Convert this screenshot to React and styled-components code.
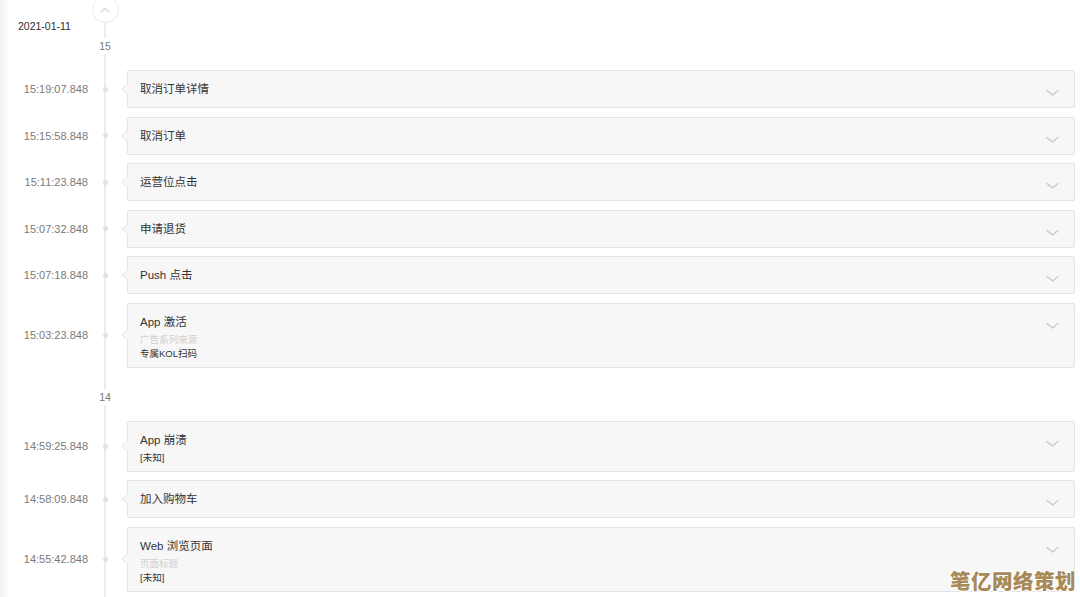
import React from "react";
import styled, { createGlobalStyle } from "styled-components";

const Global = createGlobalStyle`
  html, body { margin: 0; padding: 0; background: #fff; }
  body {
    font-family: "Liberation Sans", "Noto Sans CJK SC", Arial, sans-serif;
    -webkit-font-smoothing: antialiased;
  }
`;

const Page = styled.div`
  position: relative;
  width: 1080px;
  height: 597px;
  overflow: hidden;
  background:
    linear-gradient(#ececec, #ececec) no-repeat 104px 0 / 2px 100%,
    linear-gradient(to right, #f1f1f1, #ffffff 9px) no-repeat 0 0 / 100% 100%;
`;

const Header = styled.div`
  display: grid;
  grid-template-columns: 96px 18px;
  height: 36px;
`;

const DateText = styled.div`
  padding: 19px 0 0 18px;
  font-size: 10.5px;
  line-height: 14px;
  color: #2e2e2e;
`;

const TopButton = styled.div`
  justify-self: center;
  margin-top: -4px;
  width: 25px;
  height: 25px;
  border: 1px solid #ebebeb;
  border-radius: 50%;
  background: #fff;
  display: flex;
  align-items: center;
  justify-content: center;
`;

const GroupLabel = styled.div`
  display: grid;
  grid-template-columns: 96px 18px;
  height: 20px;
  margin: ${(p) => p.$mt}px 0 14px;
  span {
    grid-column: 2;
    justify-self: center;
    align-self: center;
    background: #fff;
    font-size: 10.5px;
    line-height: 14px;
    color: #777;
    padding: 1px 0;
  }
`;

const List = styled.div`
  display: flex;
  flex-direction: column;
  gap: ${(p) => p.$gap}px;
`;

const Row = styled.div`
  display: grid;
  grid-template-columns: 96px 18px 1fr;
  align-items: center;
`;

const Time = styled.div`
  text-align: right;
  padding-right: 8px;
  font-size: 11px;
  color: #7a7a7a;
`;

const Dot = styled.div`
  justify-self: center;
  width: 5px;
  height: 5px;
  border-radius: 50%;
  background: #e2e2e2;
`;

const Card = styled.div`
  position: relative;
  margin: 0 5px 0 13px;
  display: flex;
  align-items: flex-start;
  background: #f7f7f7;
  border: 1px solid #e4e4e4;
  border-radius: 2px;
  padding: 10px 15px ${(p) => (p.$rich ? 6 : 10)}px 12px;
  &::before,
  &::after {
    content: "";
    position: absolute;
    top: 50%;
    width: 0;
    height: 0;
    border-style: solid;
  }
  &::before {
    left: -7px;
    margin-top: -6px;
    border-width: 6px 7px 6px 0;
    border-color: transparent #e4e4e4 transparent transparent;
  }
  &::after {
    left: -6px;
    margin-top: -5px;
    border-width: 5px 6px 5px 0;
    border-color: transparent #f7f7f7 transparent transparent;
  }
`;

const Body = styled.div`
  flex: 1;
  min-width: 0;
`;

const Title = styled.div`
  font-family: "Liberation Sans", "Noto Sans CJK SC", sans-serif;
  font-size: 11.5px;
  line-height: 16px;
  height: 16px;
  color: #333;
`;

const Details = styled.div`
  margin-top: 3px;
`;

const Line = styled.div`
  font-family: "Liberation Sans", "Noto Sans CJK SC", sans-serif;
  font-size: 9.5px;
  line-height: 14px;
  height: 14px;
  color: ${(p) => (p.$muted ? "#cfcfcf" : "#333")};
`;

const Chevron = styled.svg`
  flex: none;
  margin-top: 8px;
`;

const Watermark = styled.div`
  position: absolute;
  right: 4px;
  bottom: 5px;
  font-family: "Noto Sans CJK SC", sans-serif;
  font-weight: 900;
  font-size: 20.5px;
  line-height: 24px;
  letter-spacing: 0.5px;
  color: #a88a58;
  text-shadow: 1px 0 0 #fff, -1px 0 0 #fff, 0 1px 0 #fff, 0 -1px 0 #fff,
    1px 1px 0 #fff, -1px -1px 0 #fff, 1px -1px 0 #fff, -1px 1px 0 #fff;
`;

const ChevronDown = () => (
  <Chevron width="13" height="8" viewBox="0 0 13 8">
    <polyline
      points="1,1.5 6.5,6 12,1.5"
      fill="none"
      stroke="#c9c9c9"
      strokeWidth="1.4"
      strokeLinecap="round"
      strokeLinejoin="round"
    />
  </Chevron>
);

const ChevronUp = () => (
  <svg width="10" height="6" viewBox="0 0 10 6">
    <polyline
      points="1,5 5,1.5 9,5"
      fill="none"
      stroke="#d6d6d6"
      strokeWidth="1.2"
      strokeLinecap="round"
      strokeLinejoin="round"
    />
  </svg>
);

const groups = [
  {
    label: "15",
    mt: 0,
    gap: 8.6,
    items: [
      { time: "15:19:07.848", title: "取消订单详情" },
      { time: "15:15:58.848", title: "取消订单" },
      { time: "15:11:23.848", title: "运营位点击" },
      { time: "15:07:32.848", title: "申请退货" },
      { time: "15:07:18.848", title: "Push 点击" },
      {
        time: "15:03:23.848",
        title: "App 激活",
        lines: [
          { text: "广告系列来源", muted: true },
          { text: "专属KOL扫码" },
        ],
      },
    ],
  },
  {
    label: "14",
    mt: 19,
    gap: 8.5,
    items: [
      { time: "14:59:25.848", title: "App 崩溃", lines: [{ text: "[未知]" }] },
      { time: "14:58:09.848", title: "加入购物车" },
      {
        time: "14:55:42.848",
        title: "Web 浏览页面",
        lines: [{ text: "页面标题", muted: true }, { text: "[未知]" }],
      },
    ],
  },
];

export default function App() {
  return (
    <>
      <Global />
      <Page>
        <Header>
          <DateText>2021-01-11</DateText>
          <TopButton>
            <ChevronUp />
          </TopButton>
        </Header>
        {groups.map((g) => (
          <React.Fragment key={g.label}>
            <GroupLabel $mt={g.mt}>
              <span>{g.label}</span>
            </GroupLabel>
            <List $gap={g.gap}>
              {g.items.map((it) => (
                <Row key={it.time}>
                  <Time>{it.time}</Time>
                  <Dot />
                  <Card $rich={!!it.lines}>
                    <Body>
                      <Title>{it.title}</Title>
                      {it.lines && (
                        <Details>
                          {it.lines.map((l) => (
                            <Line key={l.text} $muted={l.muted}>
                              {l.text}
                            </Line>
                          ))}
                        </Details>
                      )}
                    </Body>
                    <ChevronDown />
                  </Card>
                </Row>
              ))}
            </List>
          </React.Fragment>
        ))}
        <Watermark>笔亿网络策划</Watermark>
      </Page>
    </>
  );
}
